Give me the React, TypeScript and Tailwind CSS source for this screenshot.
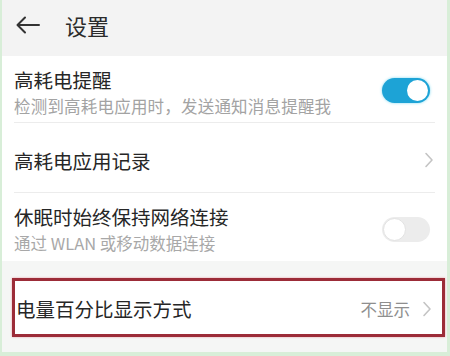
import React from "react";

const font = { fontFamily: '"Noto Sans CJK SC", "Noto Sans", sans-serif' };

function Chevron() {
  return (
    <svg width="10" height="16" viewBox="0 0 10 16" fill="none">
      <path d="M2 1.5 L8 8 L2 14.5" stroke="#c4c4c4" strokeWidth="1.6" strokeLinecap="round" strokeLinejoin="round" />
    </svg>
  );
}

function Toggle({ on }: { on: boolean }) {
  return on ? (
    <div className="w-[48px] h-[25px] rounded-full bg-[#1da3d6] flex items-center justify-end pr-[2px] shadow-[0_0_3px_#7fd8f0]">
      <div className="w-[21px] h-[21px] rounded-full bg-white" />
    </div>
  ) : (
    <div className="w-[48px] h-[25px] rounded-full bg-[#ececec] flex items-center justify-start pl-[1px]">
      <div className="w-[23px] h-[23px] rounded-full bg-white border border-[#e2e2e2]" />
    </div>
  );
}

export default function App() {
  return (
    <div
      style={font}
      className="w-[450px] h-[356px] overflow-hidden bg-[#f5f6f5] border-l-[2px] border-r-[3px] border-b-[4px] border-[#d8eed8] flex flex-col"
    >
      <div className="h-[56px] shrink-0 bg-[#f3f3f3] flex items-center pl-[13px] pb-[6px]">
        <svg width="26" height="18" viewBox="0 0 26 18" fill="none">
          <path d="M24 9 H3 M10 1.5 L2.5 9 L10 16.5" stroke="#333" strokeWidth="2" strokeLinecap="round" strokeLinejoin="round" />
        </svg>
        <span className="ml-[24px] text-[22px] text-[#2b2b2b] leading-none">设置</span>
      </div>

      <div className="bg-white flex flex-col">
        <div className="h-[66px] flex items-center pl-[12px] pr-[17px] pt-[6px]">
          <div className="flex-1 flex flex-col gap-[1px]">
            <span className="text-[19.5px] leading-[26px] text-[#262626]">高耗电提醒</span>
            <span className="text-[16.5px] leading-[24px] text-[#a3a3a3] tracking-[0.2px]">检测到高耗电应用时，发送通知消息提醒我</span>
          </div>
          <div className="-mt-[4px]">
            <Toggle on={true} />
          </div>
        </div>
        <div className="mx-[12px] h-px bg-[#ececec]" />
        <div className="h-[69px] flex items-center pl-[12px] pr-[13px] pt-[6px]">
          <span className="flex-1 text-[19.5px] text-[#262626]">高耗电应用记录</span>
          <div className="-mt-[2px]">
            <Chevron />
          </div>
        </div>
        <div className="mx-[12px] h-px bg-[#ececec]" />
        <div className="h-[68px] flex items-center pl-[12px] pr-[17px] pt-[4px]">
          <div className="flex-1 flex flex-col gap-[1px]">
            <span className="text-[19.5px] leading-[26px] text-[#262626]">休眠时始终保持网络连接</span>
            <span className="text-[16.5px] leading-[24px] text-[#a8a8a8]">通过 WLAN 或移动数据连接</span>
          </div>
          <Toggle on={false} />
        </div>
      </div>

      <div className="mt-[17px] ml-[10px] mr-[2px] h-[59px] border-[3px] border-[#9c2c38] bg-white flex items-center pl-[1px] pr-[10px] pt-[3px] shadow-[0_0_2px_#e8a0a8]">
        <span className="flex-1 text-[19.5px] text-[#262626]">电量百分比显示方式</span>
        <span className="text-[16.5px] text-[#8e8e8e] mr-[12px]">不显示</span>
        <Chevron />
      </div>
    </div>
  );
}
